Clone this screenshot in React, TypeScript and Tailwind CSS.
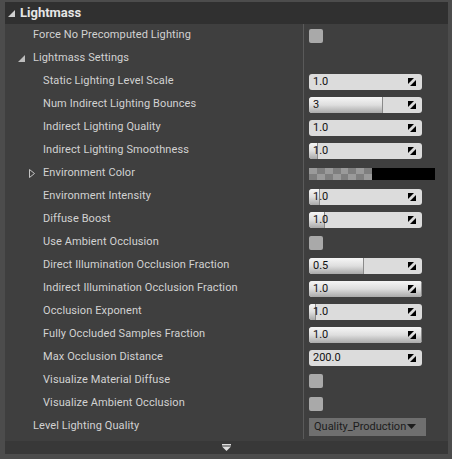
import React from "react";

type Row =
  | { kind: "check"; label: string; indent: number }
  | { kind: "group"; label: string; indent: number; open: boolean }
  | { kind: "spin"; label: string; indent: number; value: string; fill?: number }
  | { kind: "color"; label: string; indent: number }
  | { kind: "combo"; label: string; indent: number; value: string };

const rows: Row[] = [
  { kind: "check", label: "Force No Precomputed Lighting", indent: 0 },
  { kind: "group", label: "Lightmass Settings", indent: 0, open: true },
  { kind: "spin", label: "Static Lighting Level Scale", indent: 1, value: "1.0" },
  { kind: "spin", label: "Num Indirect Lighting Bounces", indent: 1, value: "3", fill: 74 },
  { kind: "spin", label: "Indirect Lighting Quality", indent: 1, value: "1.0" },
  { kind: "spin", label: "Indirect Lighting Smoothness", indent: 1, value: "1.0", fill: 9 },
  { kind: "color", label: "Environment Color", indent: 1 },
  { kind: "spin", label: "Environment Intensity", indent: 1, value: "1.0", fill: 11 },
  { kind: "spin", label: "Diffuse Boost", indent: 1, value: "1.0", fill: 16 },
  { kind: "check", label: "Use Ambient Occlusion", indent: 1 },
  { kind: "spin", label: "Direct Illumination Occlusion Fraction", indent: 1, value: "0.5", fill: 55 },
  { kind: "spin", label: "Indirect Illumination Occlusion Fraction", indent: 1, value: "1.0", fill: 113 },
  { kind: "spin", label: "Occlusion Exponent", indent: 1, value: "1.0", fill: 7 },
  { kind: "spin", label: "Fully Occluded Samples Fraction", indent: 1, value: "1.0", fill: 113 },
  { kind: "spin", label: "Max Occlusion Distance", indent: 1, value: "200.0" },
  { kind: "check", label: "Visualize Material Diffuse", indent: 1 },
  { kind: "check", label: "Visualize Ambient Occlusion", indent: 1 },
  { kind: "combo", label: "Level Lighting Quality", indent: 0, value: "Quality_Production" },
];

const font = { fontFamily: "Roboto, 'Noto Sans', sans-serif" };

function DragIcon() {
  return (
    <svg width="8" height="8" viewBox="0 0 8 8" className="shrink-0">
      <polygon points="0,0 6,0 0,6" fill="#000" />
      <polygon points="8,2 8,8 2,8" fill="#000" />
    </svg>
  );
}

function SpinBox({ value, fill }: { value: string; fill?: number }) {
  return (
    <div className="relative flex h-[16px] w-[113px] items-center overflow-hidden rounded-[3px] bg-[#dcdcdc]">
      {fill !== undefined && (
        <div
          className="absolute left-0 top-0 h-full rounded-l-[3px] border-r border-[#8a8a8a] bg-gradient-to-b from-[#f6f6f6] via-[#dedede] to-[#a9a9a9]"
          style={{ width: fill }}
        />
      )}
      <span className="relative pl-[4px] text-[11px] leading-none text-[#111]">{value}</span>
      <span className="relative ml-auto mr-[6px] flex">
        <DragIcon />
      </span>
    </div>
  );
}

function CheckBox() {
  return <div className="h-[14px] w-[14px] rounded-[2px] bg-[#a9a9a9]" />;
}

function ColorSwatch() {
  const cells = Array.from({ length: 16 });
  return (
    <div className="flex h-[12px]">
      <div className="grid h-[12px] w-[63px] grid-cols-8 grid-rows-2 overflow-hidden">
        {cells.map((_, i) => {
          const c = Math.floor(i / 8);
          const r = i % 8;
          const dark = (c + r) % 2 === 0;
          return <div key={i} className={dark ? "bg-[#9a9a9a]" : "bg-[#7f7f7f]"} />;
        })}
      </div>
      <div className="h-[12px] w-[63px] bg-black" />
    </div>
  );
}

function Combo({ value }: { value: string }) {
  return (
    <div className="flex h-[18px] w-[117px] items-center bg-[#6f6f6f] pl-[5px] pr-[3px] text-[11px] text-[#1c1c1c]">
      <span className="leading-none">{value}</span>
      <svg width="9" height="5" viewBox="0 0 9 5" className="ml-[1px]">
        <polygon points="0,0 9,0 4.5,5" fill="#1c1c1c" />
      </svg>
    </div>
  );
}

function OpenArrow() {
  return (
    <svg width="7" height="7" viewBox="0 0 7 7">
      <polygon points="7,0 7,7 0,7" fill="#bdbdbd" />
    </svg>
  );
}

function ClosedArrow() {
  return (
    <svg width="6" height="9" viewBox="0 0 6 9">
      <polygon points="0.5,0.5 5.5,4.5 0.5,8.5" fill="none" stroke="#c4c4c4" strokeWidth="1" />
    </svg>
  );
}

export default function App() {
  return (
    <div className="h-[459px] w-[452px] bg-[#4c4c4c] pl-[5px] pr-[4px] pt-[2px]" style={font}>
      <div className="flex h-[452px] flex-col bg-[#3f3f3f]">
        <div className="flex h-[22px] shrink-0 items-center bg-[#303030] pl-[3px]">
          <svg width="7" height="7" viewBox="0 0 7 7" className="mr-[5px]">
            <polygon points="7,0 7,7 0,7" fill="#d0d0d0" />
          </svg>
          <span className="text-[13px] font-bold text-[#e6e6e6]">Lightmass</span>
        </div>
        <div className="flex flex-col">
          {rows.map((row, i) => (
            <div key={i} className="flex h-[23px]">
              <div className="relative flex w-[299px] items-center border-r border-[#5a5a5a] text-[11px] tracking-[0.1px] text-[#d2d2d2]">
                {row.kind === "group" && (
                  <span className="absolute left-[13px] top-[8px] flex">
                    <OpenArrow />
                  </span>
                )}
                {row.kind === "color" && (
                  <span className="absolute left-[24px] top-[7px] flex">
                    <ClosedArrow />
                  </span>
                )}
                <span className={row.indent ? "pl-[38px]" : "pl-[28px]"}>{row.label}</span>
              </div>
              <div className="flex items-center pl-[5px]">
                {row.kind === "check" && <CheckBox />}
                {row.kind === "spin" && <SpinBox value={row.value} fill={row.fill} />}
                {row.kind === "color" && <ColorSwatch />}
                {row.kind === "combo" && <Combo value={row.value} />}
              </div>
            </div>
          ))}
          <div className="flex h-[1px]">
            <div className="w-[299px] border-r border-[#5a5a5a]" />
          </div>
        </div>
        <div className="mt-auto flex h-[13px] shrink-0 items-center justify-center bg-[#383838]">
          <svg width="9" height="7" viewBox="0 0 9 7">
            <rect x="0" y="0" width="9" height="1.5" fill="#e0e0e0" />
            <polygon points="0,2.5 9,2.5 4.5,7" fill="#e0e0e0" />
          </svg>
        </div>
      </div>
    </div>
  );
}
